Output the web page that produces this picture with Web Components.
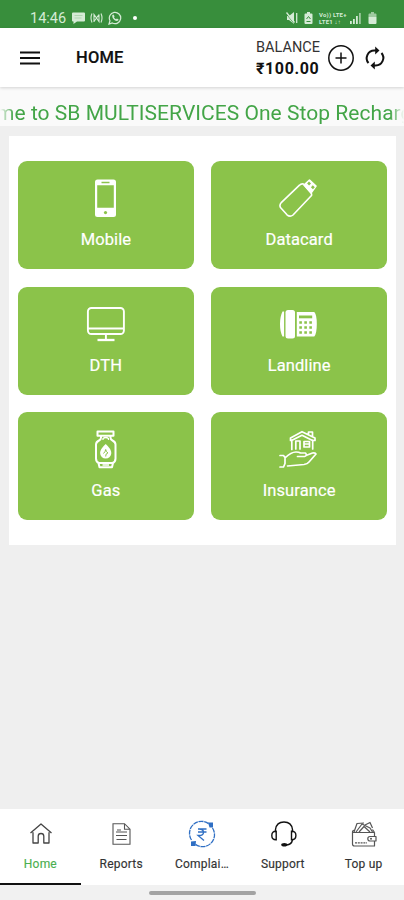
<!DOCTYPE html>
<html lang="en">
<head>
<meta charset="UTF-8">
<meta name="viewport" content="width=device-width, initial-scale=1.0">
<title>SB Multiservices</title>
<style>
    body {
        margin: 0;
        font-family: Roboto, "Liberation Sans", sans-serif;
        background: #efefef;
        color: #111;
    }
</style>
</head>
<body>
<app-screen>
    <status-bar slot="status" time="14:46"></status-bar>
    <app-header slot="header" balance="₹100.00">HOME</app-header>
    <news-ticker slot="ticker">me to SB MULTISERVICES One Stop Recharg</news-ticker>
    <service-grid>
        <service-tile icon="mobile">Mobile</service-tile>
        <service-tile icon="datacard">Datacard</service-tile>
        <service-tile icon="dth">DTH</service-tile>
        <service-tile icon="landline">Landline</service-tile>
        <service-tile icon="gas">Gas</service-tile>
        <service-tile icon="insurance">Insurance</service-tile>
    </service-grid>
    <tab-bar slot="tabs">
        <tab-item icon="home" active>Home</tab-item>
        <tab-item icon="reports">Reports</tab-item>
        <tab-item icon="complaint">Complai…</tab-item>
        <tab-item icon="support">Support</tab-item>
        <tab-item icon="wallet">Top up</tab-item>
    </tab-bar>
</app-screen>

<script>
// Every icon is [width, height, markup]
const ICONS = {
    chat: [13, 12, `<path fill="currentColor" d="M1 0.5h11a1 1 0 0 1 1 1v7a1 1 0 0 1-1 1H5L1.500 12V9.500H1a1 1 0 0 1-1-1v-7a1 1 0 0 1 1-1z"/><path stroke="#388e3c" stroke-width=".6" opacity=".4" d="M2.500 3.500h8M2.500 6h7"/>`],
    cast: [13, 12, `<g fill="none" stroke="currentColor" stroke-width="1.100"><path d="M2 1.500Q0 6 2 10.500M11 1.500q2 4.500 0 9M4 10V2.500l5 7V2.500M9 2.500L4 9.500"/></g>`],
    whatsapp: [14, 14, `<path d="M1 13l1-3.300A5.700 5.700 0 1 1 4.300 12z" fill="none" stroke="currentColor" stroke-width="1.200"/><path fill="currentColor" d="M4.300 4l1.100-.6 1.200 1.900-.6.900q.7 1.400 2 2l.9-.7 1.700 1-.4 1.100C7.500 11 3.700 7.500 4.300 4z"/>`],
    mute: [12, 12, `<path fill="currentColor" d="M1 4h2l5-4v12L3 8H1z"/><path d="M0 1.500l8 10" stroke="#388e3c" stroke-width=".8"/><path d="M.5.500l8 10M10.700 1v10" stroke="currentColor" stroke-width="1.300"/>`],
    saver: [9, 12, `<path fill="currentColor" d="M3 0h3v1.500h1.500q1 0 1 1V11q0 1-1 1h-6q-1 0-1-1V2.500q0-1 1-1H3z"/><path d="M2.500 7l2-2.500 2 2.500M2.500 9.500h4" stroke="#388e3c" fill="none"/>`],
    signal: [12, 12, `<path fill="currentColor" d="M0 9h1.800v3H0zM3 7h1.800v5H3zM6 4h1.800v8H6z"/><path fill="currentColor" opacity=".65" d="M9 1h1.800v11H9z"/>`],
    battery: [9, 12, `<path fill="currentColor" opacity=".65" d="M3 0h3v1.500h1.500q1 0 1 1V5h-8V2.500q0-1 1-1H3z"/><path fill="currentColor" d="M.5 5h8v6q0 1-1 1h-6q-1 0-1-1z"/>`],
    menu: [20, 14, `<path d="M0 1.500h20M0 7h20M0 12.500h20" stroke="currentColor" stroke-width="1.900"/>`],
    plus: [28, 28, `<g fill="none" stroke="currentColor" stroke-width="1.500"><circle cx="14" cy="14" r="12.200"/><path d="M14 8.500v11M8.500 14h11"/></g>`],
    refresh: [24, 24, `<g fill="none" stroke="currentColor" stroke-width="2"><path d="M13 4.500h-1.500A7.600 7.600 0 0 0 5.500 17M11 19.500h1.500A7.600 7.600 0 0 0 18.500 7"/></g><path fill="currentColor" d="M12.200.5l4.300 4-4.300 4zM11.800 15.500l-4.300 4 4.300 4z"/>`],
    mobile: [40, 40, `<path fill="currentColor" fill-rule="evenodd" d="M11.500 1.500h16a2.500 2.500 0 0 1 2.500 2.500v32.500a2.500 2.500 0 0 1-2.500 2.500h-16a2.500 2.500 0 0 1-2.500-2.500V4a2.500 2.500 0 0 1 2.500-2.500zM11.200 7.300v22.500h16.600V7.300zM15.500 3.800v1.400h8V3.800z"/><circle cx="19.500" cy="34.600" r="1.600" fill="#8bc34a"/>`],
    datacard: [40, 40, `<g fill="none" stroke="currentColor" stroke-width="1.600" stroke-linejoin="round"><path d="M20.500 7.200L2.500 24.300Q0 27 1.500 29.500l6.500 7.300Q11 39.500 14 37L32.500 17.500Q33 15.500 31.500 14L24.500 6Q22 5.500 20.500 7.200z"/><path fill="currentColor" d="M25 7l5.500-5 6.500 6-5 7z"/></g><path fill="#8bc34a" d="M30 3.500l2 2-1.900 1.900-2-2zM33.800 7.300l2 2-1.900 1.900-2-2z"/>`],
    dth: [40, 40, `<g fill="none" stroke="currentColor" stroke-width="1.900"><rect x="1.900" y="4" width="36" height="26" rx="3.500"/><path d="M2 24.500h36M19.900 30v5"/><path stroke-width="2.300" d="M11.500 36h17"/></g>`],
    landline: [40, 40, `<rect x="6.500" y="6" width="9.500" height="28.500" rx="2.500" fill="currentColor"/><path fill="currentColor" d="M3.500 7.500h1.700v25H3.500Q1 27.500 1 20T3.500 7.500zM17.800 8h17.500q2.500 2.500 2.500 12t-2.500 12.500H17.800z"/><path stroke="#8bc34a" stroke-width=".6" d="M5.500 7v26"/><g fill="#8bc34a"><path d="M20 11.500h13.200v2.800H20z"/><path d="M20.300 17.200h2.600v2.600h-2.600zM25.300 17.200h2.600v2.600h-2.600zM30.300 17.200h2.600v2.600h-2.600zM20.300 22.200h2.600v2.600h-2.600zM25.300 22.200h2.600v2.600h-2.600zM30.300 22.200h2.600v2.600h-2.600zM20.300 27.200h2.600v2.600h-2.600zM25.300 27.200h2.600v2.600h-2.600zM30.300 27.200h2.600v2.600h-2.600z"/></g>`],
    gas: [40, 40, `<g fill="none" stroke="currentColor" stroke-width="2" stroke-linejoin="round"><path d="M11.500 2.500h16v4.200h-16zM15 6.500v2q0 2-2 3-3 1.500-3 4v14q0 3.500 3 4.500h13.500q3-1 3-4.500v-14q0-2.500-3-4-2-1-2-3v-2"/><path d="M12.500 34l1 4.200h12.500l1-4.200"/><path stroke-width="1.300" d="M17 11V9.500q2.800-2 5.500 0V11M16.500 36h6.500"/></g><path fill="currentColor" d="M19.700 15q5.600 5 5.600 9a5.600 5.600 0 0 1-11.200 0q0-4 5.600-9z"/><path fill="none" stroke="#8bc34a" stroke-width="1" d="M17.500 24.500q2-2 2.200-4 .2 2 2.200 3.500-2.500.5-2.200 3.500"/>`],
    insurance: [40, 40, `<g fill="none" stroke="currentColor" stroke-width="1.700" stroke-linejoin="round" stroke-linecap="round"><path d="M12.800 20.500V11M33.700 20V11M11.500 11.500V9L23 2.700 36 9v2.500h-2.500L23 6.300l-10.500 5.200zM29.500 5V3h4v4.500M16.800 20v-8h4.200v8M25 12.500h5.500V18H25zM25 15h5.500"/><path d="M1 26.500h3.500l1.500 2v6L4.500 38H1M6 29q6-6 11-6 3 0 4.500 1h5q2 2.500-1 3.500h-7M27 26.500l6.500-2.500q3-.5 3.500 1L30 33q-1.500 2-5 2.500L8.500 37"/></g>`],
    home: [24, 26, `<path d="M2.500 12L13 3 23.500 12M5 11.300V22h5.200v-6.700a2.800 2.800 0 0 1 5.600 0V22H21V11.300" fill="none" stroke="#444" stroke-width="1.300" stroke-linejoin="round"/>`],
    reports: [24, 26, `<g fill="none" stroke="#555" stroke-width="1.100"><path d="M4 2.700h11.500l5.500 5.500v15H4zM15.500 2.700v5.500H21"/><path d="M7 11h11M7 14.500h11M7.500 18.500h10M8 9h4"/></g>`],
    complaint: [28, 28, `<g fill="none" stroke="currentColor" stroke-width="1.300"><path stroke-dasharray="5 .7" d="M3.500 20A12 12 0 0 1 20.500 3.600M24.500 8A12 12 0 0 1 7.500 24.400"/><path d="M10 9h8.500M10 12h8.500M11 9c6 0 6 6.500 0 6.500h-1l6 5"/></g><path fill="currentColor" d="M20 2.500h5v5h-3.500zM3 21.500l5-.5-.5 5H3z"/>`],
    support: [28, 28, `<g fill="none" stroke="currentColor" stroke-width="1.400" stroke-linecap="round"><path d="M6.500 11.500V9.500Q7.500 2 15 2t8.500 7.500v2M23.300 20.500q-.8 4-5.800 4.500"/><path d="M7.200 11.300v8.500q-4.400.2-4.400-4.300t4.400-4.200zM22.500 11.300v8.500q4.400 0 4.400-4.300t-4.400-4.200z"/></g><ellipse cx="15.300" cy="24.800" rx="3.100" ry="1.800" fill="currentColor"/>`],
    wallet: [28, 28, `<g fill="none" stroke="#555" stroke-width="1.200" stroke-linejoin="round"><path d="M2.500 12.500h22v4M24.500 21v5h-20q-2 0-2-2V12q0-2 2.500-2M24.500 12.500l-2-3M4 12l3-8.500 7-.5M6 12l6-8 8 4 2.500 4M9 12l5-5.500L20 12M15 5l5-2.500L22.500 8"/><path d="M26 16.500h-6q-2.200 0-2.200 2.200T20 21h6z"/><path d="M5 22.800h12" stroke-dasharray="2 .8"/></g><circle cx="21" cy="18.700" r="1" fill="#555"/>`]
};

class UiIcon extends HTMLElement {
    constructor() {
        super();
        this.attachShadow({ mode: 'open' });
    }

    connectedCallback() {
        const [w, h, body] = ICONS[this.getAttribute('name')];
        this.shadowRoot.innerHTML = `
            <style>
                :host { display: inline-flex; flex: none; }
                svg { display: block; }
            </style>
            <svg width="${w}" height="${h}" viewBox="0 0 ${w} ${h}">${body}</svg>
        `;
    }
}

class AppScreen extends HTMLElement {
    constructor() {
        super();
        this.attachShadow({ mode: 'open' });
        this.shadowRoot.innerHTML = `
            <style>
                :host {
                    display: flex;
                    flex-direction: column;
                    height: 900px;
                    overflow: hidden;
                }
                main { flex: 1; padding: 10px 8px 0 9px; }
                footer {
                    height: 15px;
                    display: flex;
                    justify-content: center;
                    align-items: center;
                    background: #f1f1f1;
                }
                .pill {
                    width: 107px;
                    height: 4px;
                    border-radius: 2px;
                    background: #a3a3a3;
                }
            </style>
            <slot name="status"></slot>
            <slot name="header"></slot>
            <slot name="ticker"></slot>
            <main><slot></slot></main>
            <slot name="tabs"></slot>
            <footer><div class="pill"></div></footer>
        `;
    }
}

class StatusBar extends HTMLElement {
    constructor() {
        super();
        this.attachShadow({ mode: 'open' });
    }

    connectedCallback() {
        this.shadowRoot.innerHTML = `
            <style>
                :host {
                    display: flex;
                    justify-content: space-between;
                    align-items: center;
                    box-sizing: border-box;
                    height: 28px;
                    padding: 8px 27px 0 30px;
                    background: #388e3c;
                    color: #d5ebd6;
                }
                .left, .right { display: flex; align-items: center; }
                .left { gap: 5px; }
                .right { gap: 6px; }
                .time { font-size: 14.500px; margin-right: 1px; }
                .dot {
                    width: 4px;
                    height: 4px;
                    border-radius: 50%;
                    background: #fff;
                    margin-left: 6px;
                }
                .net {
                    display: grid;
                    grid-template-rows: 7px 7px;
                    width: 29px;
                    margin-right: -4px;
                    font-size: 6px;
                    line-height: 7px;
                    font-weight: 700;
                    letter-spacing: 0.2px;
                    white-space: nowrap;
                }
            </style>
            <div class="left">
                <span class="time">${this.getAttribute('time')}</span>
                <ui-icon name="chat"></ui-icon>
                <ui-icon name="cast"></ui-icon>
                <ui-icon name="whatsapp"></ui-icon>
                <span class="dot"></span>
            </div>
            <div class="right">
                <ui-icon name="mute"></ui-icon>
                <ui-icon name="saver"></ui-icon>
                <div class="net"><span>Vo)) LTE+</span><span>LTE1 ↓↑</span></div>
                <ui-icon name="signal"></ui-icon>
                <ui-icon name="battery"></ui-icon>
            </div>
        `;
    }
}

class AppHeader extends HTMLElement {
    constructor() {
        super();
        this.attachShadow({ mode: 'open' });
    }

    connectedCallback() {
        this.shadowRoot.innerHTML = `
            <style>
                :host {
                    display: flex;
                    align-items: center;
                    box-sizing: border-box;
                    height: 59px;
                    padding: 0 17px 0 20px;
                    background: #fff;
                    box-shadow: 0 1px 3px rgba(0, 0, 0, 0.16);
                    z-index: 1;
                }
                .title {
                    flex: 1;
                    margin-left: 36px;
                    font-size: 16.500px;
                    font-weight: 500;
                    letter-spacing: 0.2px;
                    -webkit-text-stroke: 0.2px;
                }
                .balance { margin-right: 7px; line-height: 21px; }
                .label { font-size: 14.500px; color: #333; }
                .amount {
                    font-size: 16px;
                    font-weight: 700;
                    letter-spacing: 0.6px;
                }
                .plus { margin-right: 8px; }
            </style>
            <ui-icon name="menu"></ui-icon>
            <span class="title"><slot></slot></span>
            <div class="balance">
                <div class="label">BALANCE</div>
                <div class="amount">${this.getAttribute('balance')}</div>
            </div>
            <ui-icon class="plus" name="plus"></ui-icon>
            <ui-icon name="refresh"></ui-icon>
        `;
    }
}

class NewsTicker extends HTMLElement {
    constructor() {
        super();
        this.attachShadow({ mode: 'open' });
        this.shadowRoot.innerHTML = `
            <style>
                :host {
                    display: flex;
                    align-items: center;
                    box-sizing: border-box;
                    height: 39px;
                    padding-top: 13px;
                    background: #fafafa;
                    overflow: hidden;
                    color: #43a547;
                    font-size: 21px;
                    white-space: nowrap;
                }
                .track {
                    width: 100%;
                    overflow: hidden;
                    -webkit-mask-image: linear-gradient(90deg, transparent, #000 14px, #000 390px, transparent);
                    mask-image: linear-gradient(90deg, transparent, #000 14px, #000 390px, transparent);
                }
                .text {
                    display: block;
                    margin-left: -4px;
                    letter-spacing: 0.040px;
                }
            </style>
            <div class="track"><span class="text"><slot></slot></span></div>
        `;
    }
}

class ServiceGrid extends HTMLElement {
    constructor() {
        super();
        this.attachShadow({ mode: 'open' });
        this.shadowRoot.innerHTML = `
            <style>
                :host {
                    display: grid;
                    grid-template-columns: 1fr 1fr;
                    gap: 17.500px;
                    box-sizing: border-box;
                    height: 409px;
                    padding: 25px 9px;
                    background: #fff;
                }
            </style>
            <slot></slot>
        `;
    }
}

class ServiceTile extends HTMLElement {
    constructor() {
        super();
        this.attachShadow({ mode: 'open' });
    }

    connectedCallback() {
        this.shadowRoot.innerHTML = `
            <style>
                :host {
                    display: flex;
                    flex-direction: column;
                    align-items: center;
                    box-sizing: border-box;
                    padding-top: 17px;
                    background: #8bc34a;
                    border-radius: 9px;
                    color: #fff;
                }
                .label {
                    margin-top: 11px;
                    font-size: 16.500px;
                    line-height: 21px;
                    letter-spacing: 0.1px;
                    -webkit-text-stroke: 0.2px;
                }
            </style>
            <ui-icon name="${this.getAttribute('icon')}"></ui-icon>
            <span class="label"><slot></slot></span>
        `;
    }
}

class TabBar extends HTMLElement {
    constructor() {
        super();
        this.attachShadow({ mode: 'open' });
        this.shadowRoot.innerHTML = `
            <style>
                :host {
                    display: grid;
                    grid-template-columns: repeat(5, 1fr);
                    height: 76px;
                    background: #fff;
                }
            </style>
            <slot></slot>
        `;
    }
}

class TabItem extends HTMLElement {
    constructor() {
        super();
        this.attachShadow({ mode: 'open' });
    }

    connectedCallback() {
        this.shadowRoot.innerHTML = `
            <style>
                :host {
                    display: flex;
                    flex-direction: column;
                    align-items: center;
                    box-sizing: border-box;
                    padding-top: 10px;
                    border-bottom: 2px solid transparent;
                    color: #333;
                }
                :host([active]) { border-bottom-color: #111; }
                :host([active]) .label { color: #4caf50; }
                :host([icon="complaint"]) ui-icon { color: #2f6fc4; }
                :host([icon="support"]) ui-icon { color: #111; }
                .icon {
                    height: 30px;
                    display: flex;
                    align-items: center;
                }
                .label {
                    margin-top: 7px;
                    font-size: 12px;
                    line-height: 17px;
                    letter-spacing: 0.2px;
                    white-space: nowrap;
                    -webkit-text-stroke: 0.15px;
                }
            </style>
            <div class="icon"><ui-icon name="${this.getAttribute('icon')}"></ui-icon></div>
            <span class="label"><slot></slot></span>
        `;
    }
}

customElements.define('ui-icon', UiIcon);
customElements.define('app-screen', AppScreen);
customElements.define('status-bar', StatusBar);
customElements.define('app-header', AppHeader);
customElements.define('news-ticker', NewsTicker);
customElements.define('service-grid', ServiceGrid);
customElements.define('service-tile', ServiceTile);
customElements.define('tab-bar', TabBar);
customElements.define('tab-item', TabItem);
</script>
</body>
</html>
